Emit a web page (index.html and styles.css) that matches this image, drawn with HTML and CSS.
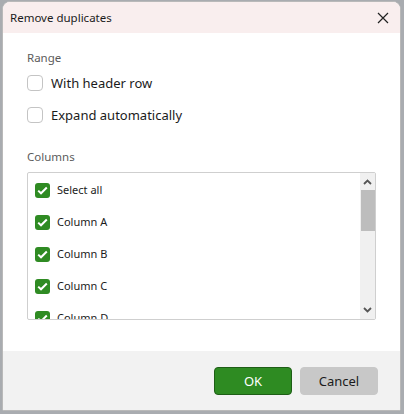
FILE: index.html
```html
<!DOCTYPE html>
<html lang="en">
<head>
  <meta charset="UTF-8">
  <meta name="viewport" content="width=device-width, initial-scale=1.0">
  <title>Remove duplicates</title>
  <link rel="stylesheet" href="styles.css">
</head>
<body>
  <div class="dialog">
    <div class="titlebar">
      <span class="title">Remove duplicates</span>
      <svg class="close" width="12" height="12" viewBox="0 0 12 12">
        <path d="M1 1 L11 11 M11 1 L1 11" stroke="#222" stroke-width="1.2" fill="none"/>
      </svg>
    </div>
    <div class="body">
      <div class="label">Range</div>
      <div class="options">
        <label class="option"><span class="box"></span>With header row</label>
        <label class="option"><span class="box"></span>Expand automatically</label>
      </div>
      <div class="label columns-label">Columns</div>
      <div class="listbox">
        <div class="items">
          <div class="item"><span class="check"><svg width="11" height="9" viewBox="0 0 11 9"><path d="M1.2 4.6 L4 7.3 L9.8 1.5" stroke="#fff" stroke-width="2" fill="none"/></svg></span>Select all</div>
          <div class="item"><span class="check"><svg width="11" height="9" viewBox="0 0 11 9"><path d="M1.2 4.6 L4 7.3 L9.8 1.5" stroke="#fff" stroke-width="2" fill="none"/></svg></span>Column A</div>
          <div class="item"><span class="check"><svg width="11" height="9" viewBox="0 0 11 9"><path d="M1.2 4.6 L4 7.3 L9.8 1.5" stroke="#fff" stroke-width="2" fill="none"/></svg></span>Column B</div>
          <div class="item"><span class="check"><svg width="11" height="9" viewBox="0 0 11 9"><path d="M1.2 4.6 L4 7.3 L9.8 1.5" stroke="#fff" stroke-width="2" fill="none"/></svg></span>Column C</div>
          <div class="item"><span class="check"><svg width="11" height="9" viewBox="0 0 11 9"><path d="M1.2 4.6 L4 7.3 L9.8 1.5" stroke="#fff" stroke-width="2" fill="none"/></svg></span>Column D</div>
        </div>
        <div class="scrollbar">
          <svg class="arrow" width="9" height="6" viewBox="0 0 9 6"><path d="M1 5 L4.5 1.5 L8 5" stroke="#555" stroke-width="1.8" fill="none"/></svg>
          <div class="thumb"></div>
          <div class="track"></div>
          <svg class="arrow" width="9" height="6" viewBox="0 0 9 6"><path d="M1 1 L4.5 4.5 L8 1" stroke="#555" stroke-width="1.8" fill="none"/></svg>
        </div>
      </div>
    </div>
    <div class="footer">
      <button class="btn ok">OK</button>
      <button class="btn cancel">Cancel</button>
    </div>
  </div>
</body>
</html>
```

FILE: styles.css
```css
/* page behind the dialog */
body {
  margin: 0;
  padding: 1px 3px 3px 2px;
  background-color: #a9acb0;
  font-family: "Noto Sans", "Open Sans", sans-serif;
  color: #1b1b1b;
}

.dialog {
  width: 397px;
  height: 408px;
  display: flex;
  flex-direction: column;
  border: 1px solid #b9b9b9;
  border-radius: 8px 8px 2px 2px;
  overflow: hidden;
  background-color: #fff;
}

/* title bar */
.titlebar {
  height: 31px;
  display: flex;
  align-items: center;
  justify-content: space-between;
  padding: 0 11px 0 7px;
  background-color: #f9eeee;
}
.title {
  font-size: 11.5px;
}

/* content */
.body {
  flex: 1;
  display: flex;
  flex-direction: column;
  padding: 17px 24px 0 24px;
}
.label {
  font-size: 11.5px;
  color: #5b5b5b;
  line-height: 16px;
}
.options {
  display: flex;
  flex-direction: column;
  gap: 14px;
  margin-top: 8px;
}
.option {
  display: flex;
  align-items: center;
  gap: 8px;
  font-size: 13px;
  line-height: 18px;
}
.box {
  width: 14px;
  height: 14px;
  border: 1px solid #c4c4c4;
  border-radius: 4px;
  background-color: #fff;
}
.columns-label {
  margin-top: 25px;
}

/* column list */
.listbox {
  margin-top: 7px;
  height: 146px;
  display: flex;
  border: 1px solid #cfcfcf;
  border-radius: 2px;
}
.items {
  flex: 1;
  overflow: hidden;
  display: flex;
  flex-direction: column;
  gap: 16px;
  padding: 9px 0 0 7px;
}
.item {
  display: flex;
  align-items: center;
  gap: 7px;
  font-size: 11px;
  line-height: 16px;
  flex-shrink: 0;
}
.check {
  width: 15px;
  height: 15px;
  border-radius: 3px;
  background-color: #2f8b23;
  display: flex;
  align-items: center;
  justify-content: center;
}
.scrollbar {
  width: 15px;
  display: flex;
  flex-direction: column;
  align-items: center;
  background-color: #f0f0f0;
  padding: 6px 0;
}
.arrow {
  flex-shrink: 0;
}
.thumb {
  width: 14px;
  height: 41px;
  margin-top: 5px;
  background-color: #bdbdbd;
}
.track {
  flex: 1;
}

/* buttons */
.footer {
  height: 59px;
  display: flex;
  justify-content: flex-end;
  align-items: flex-start;
  gap: 8px;
  padding: 16px 22px 0 0;
  background-color: #f2f2f2;
  box-sizing: border-box;
}
.btn {
  width: 78px;
  height: 28px;
  border-radius: 4px;
  font-family: "Noto Sans", "Open Sans", sans-serif;
  font-size: 13px;
}
.ok {
  background-color: #2e8b22;
  border: 1px solid #1e5e16;
  color: #fff;
}
.cancel {
  background-color: #c8c8c8;
  border: 1px solid #c8c8c8;
  color: #1b1b1b;
}
```
